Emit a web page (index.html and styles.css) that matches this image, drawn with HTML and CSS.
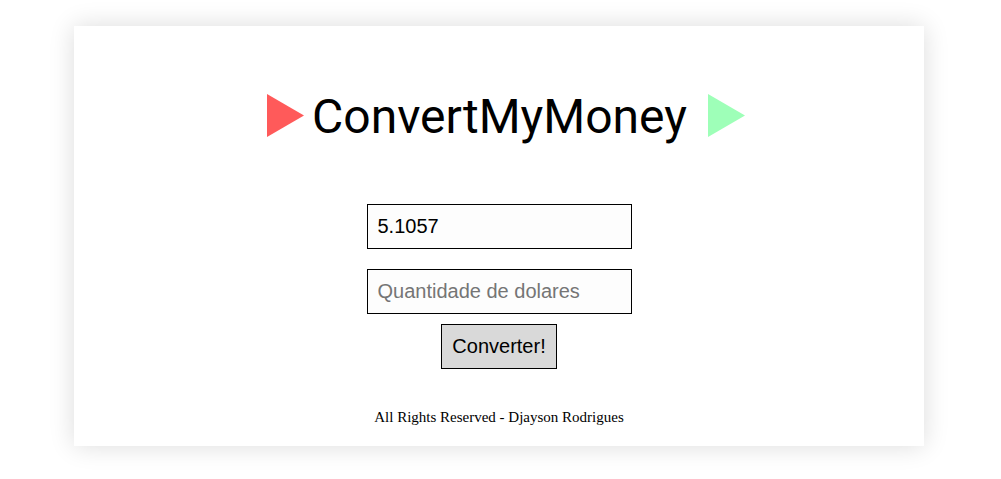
FILE: index.html
```html
<!DOCTYPE html>
<html lang="pt">
<head>
<meta charset="utf-8">
<title>ConvertMyMoney</title>
<link rel="stylesheet" href="styles.css">
</head>
<body>
<div class="card">
  <h1 class="title">
    <svg class="tri" width="37" height="43" viewBox="0 0 37 43"><polygon points="0,0 37,21.5 0,43" fill="#ff5a5a"/></svg>
    <span class="title-text">ConvertMyMoney</span>
    <svg class="tri" width="37" height="43" viewBox="0 0 37 43"><polygon points="0,0 37,21.5 0,43" fill="#9effb8"/></svg>
  </h1>
  <form class="form">
    <input class="field" type="text" value="5.1057">
    <input class="field field-second" type="text" placeholder="Quantidade de dolares">
    <button class="btn" type="button">Converter!</button>
  </form>
  <p class="footer">All Rights Reserved - Djayson Rodrigues</p>
</div>
</body>
</html>
```
FILE: styles.css
```css
html, body {
  margin: 0;
  padding: 0;
  background: #ffffff;
}
body {
  padding: 26px 0 33px 0;
  min-height: 479px;
  box-sizing: border-box;
}
.card {
  margin-left: 74px;
  width: 850px;
  height: 420px;
  background: #ffffff;
  box-shadow: 0 0 24px rgba(0, 0, 0, 0.14);
  display: flex;
  flex-direction: column;
  align-items: center;
}
.title {
  margin: 67px 0 0 14px;
  display: flex;
  align-items: center;
  gap: 8px;
  font-family: Roboto, "Liberation Sans", sans-serif;
  font-weight: 400;
  font-size: 48px;
  line-height: 48px;
  color: #000;
}
.title-text {
  margin: 0 13px 0 0;
}
.tri {
  display: block;
  margin-bottom: 3px;
}
.form {
  margin-top: 63px;
  display: flex;
  flex-direction: column;
  align-items: center;
}
.field {
  box-sizing: border-box;
  width: 265px;
  height: 45px;
  border: 1px solid #000;
  background: #fdfdfd;
  padding: 0 10px;
  font-family: Arial, "Liberation Sans", sans-serif;
  font-size: 20px;
  color: #000;
  outline: none;
  margin: 0;
}
.field::placeholder {
  color: #757575;
}
.field-second {
  margin-top: 20px;
}
.btn {
  box-sizing: border-box;
  margin-top: 10px;
  height: 45px;
  padding: 0 10px;
  border: 1px solid #000;
  background: #d9d9d9;
  font-family: Arial, "Liberation Sans", sans-serif;
  font-size: 20px;
  color: #000;
}
.footer {
  margin: 38px 0 0 0;
  font-family: "Liberation Serif", "Times New Roman", serif;
  font-size: 15px;
  line-height: 20px;
  color: #000;
}
```
